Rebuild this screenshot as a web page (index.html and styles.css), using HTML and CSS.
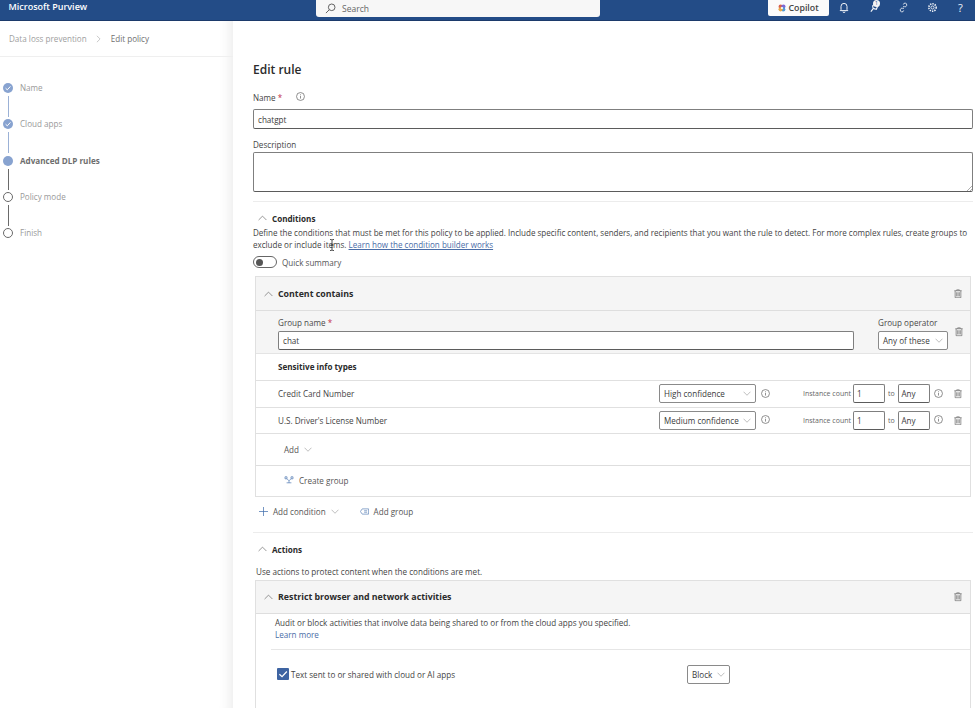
FILE: index.html
```html
<!DOCTYPE html>
<html lang="en">
<head>
<meta charset="utf-8">
<title>Edit rule - Microsoft Purview</title>
<link rel="stylesheet" href="styles.css">
</head>
<body>
<svg class="defs" width="0" height="0" aria-hidden="true">
  <defs>
    <symbol id="chev" viewBox="0 0 10 6"><path d="M.7.8 5 5.2 9.3.8" fill="none" stroke="currentColor" stroke-width=".8"/></symbol>
    <symbol id="up" viewBox="0 0 12 7"><path d="M.8 6.2 6 1l5.2 5.2" fill="none" stroke="currentColor" stroke-width=".9"/></symbol>
    <symbol id="info" viewBox="0 0 10 10"><circle cx="5" cy="5" r="4.4" fill="none" stroke="currentColor" stroke-width=".8"/><path d="M5 4.3v3M5 2.6v.9" stroke="currentColor" stroke-width=".8"/></symbol>
    <symbol id="trash" viewBox="0 0 9 10"><path d="M.4 1.6h8.2M3 1.5V.6h3v.9M1.3 1.7v7.8h6.4V1.7M3 3.3v4.7M4.5 3.3v4.7M6 3.3v4.7" fill="none" stroke="currentColor" stroke-width=".8"/></symbol>
  </defs>
</svg>

<header class="topbar">
  <div class="brand">Microsoft Purview</div>
  <div class="search">
    <svg class="search-icon" viewBox="0 0 12 12"><circle cx="7.3" cy="4.7" r="3.6" fill="none" stroke="currentColor"/><path d="M4.7 7.3 1 11" stroke="currentColor"/></svg>
    <span>Search</span>
  </div>
  <div class="top-actions">
    <div class="copilot">
      <svg class="copilot-icon" viewBox="0 0 10 10"><circle cx="3.3" cy="3.3" r="2.6" fill="#d9604e"/><circle cx="6.8" cy="3.2" r="2.6" fill="#7d6ad6"/><circle cx="6.6" cy="6.8" r="2.6" fill="#4d9bd8"/><circle cx="3.2" cy="6.7" r="2.6" fill="#e7a94b"/><circle cx="5" cy="5" r="1.4" fill="#fff"/></svg>
      <span>Copilot</span>
    </div>
    <svg class="top-icon bell" viewBox="0 0 10 11"><path d="M2 7.6V4.4a3 3 0 0 1 6 0v3.2l.8 1H1.200zM4 9.600a1 1 0 0 0 2 0" fill="none" stroke="currentColor"/></svg>
    <div class="bulb-wrap">
      <svg class="top-icon bulb" viewBox="0 0 12 12"><path d="M10 3.200 8 8 4.500 7 4 4.200 6.200 2zM4.200 7.800 2 10.500" fill="none" stroke="currentColor" stroke-width="1.300"/></svg>
      <span class="bulb-badge">1</span>
    </div>
    <svg class="top-icon" viewBox="0 0 12 12"><path d="M5.800 2.800a1.800 1.800 0 0 1 3.700.6 1.800 1.800 0 0 1-2.500 1.700H5.500M6.200 9.200a1.800 1.800 0 0 1-3.700-.6A1.800 1.800 0 0 1 5 6.900h1.500" fill="none" stroke="currentColor" stroke-width=".9"/></svg>
    <svg class="top-icon" viewBox="0 0 12 12"><circle cx="6" cy="6" r="1.700" fill="none" stroke="currentColor"/><circle cx="6" cy="6" r="4" fill="none" stroke="currentColor" stroke-width="1.700" stroke-dasharray="1.500 1.100"/></svg>
    <span class="help">?</span>
  </div>
</header>

<div class="page">
  <aside class="side">
    <nav class="crumbs">
      <span class="crumb-link">Data loss prevention</span>
      <svg class="crumb-sep" viewBox="0 0 6 10"><path d="M1 1l4 4-4 4" fill="none" stroke="currentColor" stroke-width=".8"/></svg>
      <span class="crumb-current">Edit policy</span>
    </nav>
    <ol class="steps">
      <li class="step done">
        <span class="dot"><svg viewBox="0 0 10 10"><path d="M2.600 5.200 4.300 6.800 7.400 3.400" fill="none" stroke="#fff" stroke-width="1"/></svg></span>
        <span class="step-label">Name</span>
      </li>
      <li class="step done">
        <span class="dot"><svg viewBox="0 0 10 10"><path d="M2.600 5.200 4.300 6.800 7.400 3.400" fill="none" stroke="#fff" stroke-width="1"/></svg></span>
        <span class="step-label">Cloud apps</span>
      </li>
      <li class="step current">
        <span class="dot"></span>
        <span class="step-label">Advanced DLP rules</span>
      </li>
      <li class="step todo">
        <span class="dot"></span>
        <span class="step-label">Policy mode</span>
      </li>
      <li class="step todo last">
        <span class="dot"></span>
        <span class="step-label">Finish</span>
      </li>
    </ol>
  </aside>

  <main class="main">
    <h1 class="title">Edit rule</h1>
    <div class="name-label"><span>Name</span><span class="req">*</span><svg class="info name-info"><use href="#info"/></svg></div>
    <div class="field name-field">chatgpt</div>
    <div class="desc-label">Description</div>
    <div class="field textarea">
      <svg class="grip" viewBox="0 0 6 6"><path d="M6 1 1 6M6 4 4 6" stroke="#777" stroke-width=".6"/></svg>
    </div>
    <hr class="rule rule-a">

    <div class="section-head cond-head"><svg class="up"><use href="#up"/></svg><span>Conditions</span></div>
    <p class="intro">Define the conditions that must be met for this policy to be applied. Include specific content, senders, and recipients that you want the rule to detect. For more complex rules, create groups to exclude or include items. <a class="link">Learn how the condition builder works</a></p>
    <svg class="ibeam" viewBox="0 0 6 12"><path d="M1 .5h1.200L3 1l.8-.5H5M3 1v10M1 11.500h1.200L3 11l.8.5H5M1.500 6h3" fill="none" stroke="#222" stroke-width=".8"/></svg>
    <div class="toggle-row"><span class="toggle"><span class="knob"></span></span><span>Quick summary</span></div>

    <section class="card cond-card">
      <div class="card-head">
        <svg class="up"><use href="#up"/></svg>
        <span class="card-title">Content contains</span>
        <svg class="trash"><use href="#trash"/></svg>
      </div>
      <div class="group-row">
        <div class="group-name">
          <div class="small-label">Group name <span class="req-inline">*</span></div>
          <div class="field group-input">chat</div>
        </div>
        <div class="group-op">
          <div class="small-label">Group operator</div>
          <div class="field select op-select"><span>Any of these</span><svg class="chev"><use href="#chev"/></svg></div>
        </div>
        <svg class="trash group-trash"><use href="#trash"/></svg>
      </div>
      <div class="types-head">Sensitive info types</div>
      <div class="type-row">
        <span class="type-name">Credit Card Number</span>
        <div class="field select conf"><span>High confidence</span><svg class="chev"><use href="#chev"/></svg></div>
        <svg class="info conf-info"><use href="#info"/></svg>
        <span class="count-label">Instance count</span>
        <div class="field num">1</div><span class="to">to</span><div class="field num">Any</div>
        <svg class="info count-info"><use href="#info"/></svg>
        <svg class="trash"><use href="#trash"/></svg>
      </div>
      <div class="type-row">
        <span class="type-name">U.S. Driver's License Number</span>
        <div class="field select conf"><span>Medium confidence</span><svg class="chev"><use href="#chev"/></svg></div>
        <svg class="info conf-info"><use href="#info"/></svg>
        <span class="count-label">Instance count</span>
        <div class="field num">1</div><span class="to">to</span><div class="field num">Any</div>
        <svg class="info count-info"><use href="#info"/></svg>
        <svg class="trash"><use href="#trash"/></svg>
      </div>
      <div class="add-row"><span>Add</span><svg class="chev"><use href="#chev"/></svg></div>
      <div class="create-row">
        <svg class="create-icon" viewBox="0 0 12 10"><path d="M1 1h2.500v2.500H1zM8.500 1H11v2.500H8.500zM3.500 3.500 6 6l2.500-2.500M3 8.500h6M6 6v2.500" fill="none" stroke="#3f6cab" stroke-width=".8"/></svg>
        <span>Create group</span>
      </div>
    </section>

    <div class="add-actions">
      <svg class="plus" viewBox="0 0 10 10"><path d="M5 0v10M0 5h10" stroke="#3f6cab" stroke-width=".8"/></svg>
      <span>Add condition</span>
      <svg class="chev"><use href="#chev"/></svg>
      <svg class="group-icon" viewBox="0 0 12 8"><path d="M3 .5h8.500v7H3L.5 4zM5.500 3h4M5.500 5h4" fill="none" stroke="#3f6cab" stroke-width=".8"/></svg>
      <span>Add group</span>
    </div>
    <hr class="rule rule-b">

    <div class="section-head act-head"><svg class="up"><use href="#up"/></svg><span>Actions</span></div>
    <p class="act-intro">Use actions to protect content when the conditions are met.</p>

    <section class="card act-card">
      <div class="card-head">
        <svg class="up"><use href="#up"/></svg>
        <span class="card-title">Restrict browser and network activities</span>
        <svg class="trash"><use href="#trash"/></svg>
      </div>
      <div class="act-body">
        <p class="act-text">Audit or block activities that involve data being shared to or from the cloud apps you specified.<br><a class="link plain">Learn more</a></p>
        <hr class="act-rule">
        <div class="check-row">
          <span class="check"><svg viewBox="0 0 10 10"><path d="M2 5.200 4.200 7.300 8.200 2.900" fill="none" stroke="#fff" stroke-width="1"/></svg></span>
          <span class="check-label">Text sent to or shared with cloud or AI apps</span>
          <div class="field select block"><span>Block</span><svg class="chev"><use href="#chev"/></svg></div>
        </div>
      </div>
    </section>
  </main>
</div>
</body>
</html>
```
FILE: styles.css
```css
* { box-sizing: border-box; }
html, body { margin: 0; padding: 0; height: 708px; overflow: hidden; }
body { font-family: "Open Sans", "Noto Sans", sans-serif; font-size: 8.1px; color: #3a3a3a; background: #fff; }
.defs { position: absolute; }

.topbar { height: 21px; background: #234c87; border-bottom: 1.5px solid #1c3a6b; display: flex; align-items: flex-start; color: #fff; position: relative; }
.brand { font-size: 9px; font-weight: 600; padding: 0 0 0 8.500px; width: 316px; line-height: 14px; }
.search { width: 284px; height: 17px; background: #f7f7f7; border-radius: 0 0 3px 3px; display: flex; align-items: center; color: #666; font-size: 8.500px; padding-left: 9px; gap: 6px; }
.search-icon { width: 11px; height: 11px; color: #555; }
.top-actions { margin-left: auto; display: flex; align-items: center; color: #f0f3f8; height: 15px; }
.copilot { width: 61px; height: 16px; background: #fbfbfb; border-radius: 0 0 2px 2px; display: flex; align-items: center; gap: 2.500px; padding-left: 10px; color: #444; font-size: 8.800px; font-weight: 600; margin-right: 10px; }
.copilot-icon { width: 8px; height: 8px; }
.top-icon { width: 11px; height: 11px; margin-right: 18px; }
.bell { width: 10px; margin-right: 20px; }
.bulb-wrap { position: relative; display: flex; margin-right: 0; }
.bulb-badge { position: absolute; top: -2px; left: 4px; width: 7px; height: 7px; border-radius: 50%; background: #f4f4f4; color: #234c87; font-size: 5px; line-height: 7px; text-align: center; }
.help { font-size: 11px; width: 19px; text-align: left; padding-left: 2px; }

.page { display: flex; height: 687px; }
.side { width: 233px; background: #fff; box-shadow: inset -16px 0 14px -14px #e9e9e9; flex: none; }
.crumbs { height: 36px; border-bottom: 1px solid #efefef; display: flex; align-items: flex-start; padding: 10.500px 0 0 9px; color: #999; gap: 9px; line-height: 14px; }
.crumb-link { color: #a0a0a0; }
.crumb-sep { width: 5px; height: 8px; margin-top: 3px; color: #aaa; }
.crumb-current { color: #6f6f6f; margin-left: 1px; }
.steps { list-style: none; margin: 26px 0 0; padding: 0 0 0 3px; }
.step { height: 36.250px; display: flex; align-items: flex-start; position: relative; gap: 7px; }
.step::after { content: ""; position: absolute; left: 4.500px; top: 13px; height: 21px; width: 1px; background: #6a6a6a; }
.step.done::after { background: #9bb1d6; width: 1.200px; }
.step.last::after { display: none; }
.dot { width: 10px; height: 10px; border-radius: 50%; flex: none; display: block; }
.dot svg { display: block; width: 10px; height: 10px; }
.done .dot, .current .dot { background: #88a3d0; }
.todo .dot { border: 1px solid #6a6a6a; background: #fff; }
.step-label { color: #999; line-height: 10px; margin-top: 0; }
.current .step-label { color: #6e6e6e; font-weight: 700; }

.main { flex: 1; padding: 0 2px 0 20px; min-width: 0; background: #fff; }
.title { font-size: 12px; font-weight: 600; color: #2b2b2b; margin: 0; padding-top: 41px; line-height: 16px; }
.name-label { display: flex; align-items: center; margin-top: 13px; height: 12px; color: #444; }
.req { color: #c4314b; margin-left: 2px; }
.req-inline { color: #c4314b; }
.name-info { margin-left: 14px; margin-top: -2px; }
.info { width: 9px; height: 9px; color: #666; flex: none; }
.field { border: 1px solid #7f7f7f; border-bottom-color: #5b5b5b; border-radius: 2px; background: #fff; display: flex; align-items: center; padding: 0 4px; color: #3a3a3a; }
.name-field { height: 20px; margin-top: 6px; }
.desc-label { margin-top: 10px; height: 12px; line-height: 12px; color: #444; }
.textarea { height: 40px; margin-top: 1px; position: relative; }
.grip { position: absolute; right: 0; bottom: 0; width: 6px; height: 6px; }
.rule { border: 0; border-top: 1px solid #ececec; margin: 0; }
.rule-a { margin-top: 9px; }

.section-head { display: flex; align-items: center; font-weight: 700; color: #2b2b2b; height: 12px; padding-left: 5px; gap: 5px; }
.cond-head { margin-top: 10px; }
.up { width: 9px; height: 6px; color: #666; flex: none; }
.intro { margin: 3px 0 0; line-height: 12px; color: #444; font-size: 8.050px; }
.link { color: #4a6da7; text-decoration: underline; }
.link.plain { text-decoration: none; }
.ibeam { position: absolute; left: 329px; top: 239px; width: 6px; height: 12px; }
.toggle-row { display: flex; align-items: center; gap: 5px; margin-top: 5px; height: 12px; color: #555; }
.toggle { width: 24px; height: 12px; border: 1px solid #666; border-radius: 6px; display: block; padding: 1.500px; }
.knob { display: block; width: 7px; height: 7px; background: #555; border-radius: 50%; }

.card { margin-left: 2px; margin-right: 2px; border: 1px solid #e0e0e0; border-left-width: 1.500px; }
.cond-card { margin-top: 8px; height: 221px; }
.card-head { height: 34px; background: #f5f5f5; border-bottom: 1px solid #dedede; display: flex; align-items: center; padding-left: 8px; gap: 5px; }
.card-title { font-weight: 700; font-size: 8.800px; color: #2b2b2b; flex: 1; }
.trash { width: 8px; height: 9.500px; color: #6a6a6a; flex: none; margin-right: 8px; }
.group-row { height: 43px; background: #f5f5f5; border-bottom: 1px solid #e4e4e4; display: flex; align-items: flex-start; padding: 6px 0 0 22px; }
.group-name { width: 576px; flex: none; }
.small-label { line-height: 11px; color: #4a4a4a; }
.group-input { height: 19px; margin-top: 3px; }
.group-op { width: 70px; margin-left: 24px; flex: none; }
.op-select { height: 19px; margin-top: 3px; }
.group-trash { margin: 10px 0 0 7px; }
.select { justify-content: space-between; border-color: #8a8a8a; }
.chev { width: 8px; height: 5px; color: #9a9a9a; flex: none; }
.op-select { padding: 0 4px; }
.types-head { height: 27px; border-bottom: 1px solid #e0e0e0; font-weight: 700; color: #2b2b2b; padding: 7px 0 0 22px; line-height: 12px; }
.type-row { height: 26.500px; border-bottom: 1px solid #e0e0e0; display: flex; align-items: center; padding-left: 22px; }
.type-name { width: 381px; flex: none; color: #444; }
.conf { width: 97px; height: 19px; flex: none; padding: 0 4px; }
.conf-info { margin: -1px 0 0 5px; }
.count-label { margin-left: 33px; width: 50px; font-size: 7px; color: #666; white-space: nowrap; }
.num { width: 32px; height: 19px; flex: none; padding: 0 3px; }
.to { width: 12.500px; text-align: center; font-size: 7px; color: #666; flex: none; }
.count-info { margin: -1px 0 0 4.500px; }
.type-row .trash { margin-left: 11px; }
.add-row { height: 32px; border-bottom: 1px solid #dedede; display: flex; align-items: center; padding-left: 28px; gap: 5px; color: #555; }
.create-row { height: 30px; display: flex; align-items: center; padding-left: 28px; gap: 5px; color: #555; padding-bottom: 2px; }
.create-icon { width: 10px; height: 8px; }
.add-actions { display: flex; align-items: center; height: 12px; margin-top: 8px; padding-left: 6px; color: #555; }
.plus { width: 9px; height: 9px; margin-right: 5px; }
.add-actions .chev { margin-left: 5px; }
.group-icon { width: 9px; height: 7px; margin: 0 5px 0 21px; }
.rule-b { margin-top: 15px; }
.act-head { margin-top: 10px; }
.act-intro { margin: 11px 0 0 3px; line-height: 12px; color: #444; }
.act-card { margin-top: 2px; height: 140px; border-bottom: 0; }
.act-card .card-head { height: 33px; }
.act-body { padding: 3px 0 0 19px; }
.act-text { margin: 0; line-height: 12px; color: #444; }
.act-rule { border: 0; border-top: 1px solid #e6e6e6; margin: 8px 0 0 -4px; }
.check-row { display: flex; align-items: center; margin-top: 14px; height: 20px; padding-left: 2px; }
.check { width: 12px; height: 12px; background: #3e64a2; border-radius: 1px; display: block; margin-right: 2px; }
.check svg { display: block; width: 12px; height: 12px; }
.check-label { width: 396px; flex: none; color: #444; }
.block { width: 43px; height: 19px; padding: 0 4px; }
```
